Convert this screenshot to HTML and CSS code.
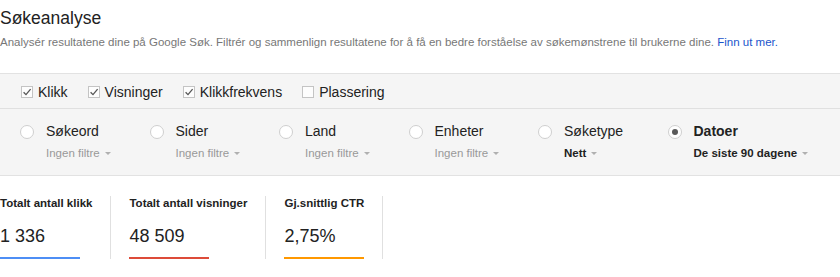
FILE: index.html
```html
<!DOCTYPE html>
<html lang="no">
<head>
<meta charset="utf-8">
<title>Søkeanalyse</title>
<link rel="stylesheet" href="styles.css">
</head>
<body>
<header class="intro">
  <h1 class="title">Søkeanalyse</h1>
  <p class="subtitle">Analysér resultatene dine på Google Søk. Filtrér og sammenlign resultatene for å få en bedre forståelse av søkemønstrene til brukerne dine. <a class="link" href="#">Finn ut mer.</a></p>
</header>

<section class="panel">
  <div class="metrics">
    <label class="check"><span class="box checked"><svg viewBox="0 0 12 12" width="12" height="12"><path d="M2.6 6.2 L5 8.6 L9.6 3.2" fill="none" stroke="#555" stroke-width="1.3"/></svg></span>Klikk</label>
    <label class="check"><span class="box checked"><svg viewBox="0 0 12 12" width="12" height="12"><path d="M2.6 6.2 L5 8.6 L9.6 3.2" fill="none" stroke="#555" stroke-width="1.3"/></svg></span>Visninger</label>
    <label class="check"><span class="box checked"><svg viewBox="0 0 12 12" width="12" height="12"><path d="M2.6 6.2 L5 8.6 L9.6 3.2" fill="none" stroke="#555" stroke-width="1.3"/></svg></span>Klikkfrekvens</label>
    <label class="check"><span class="box"></span>Plassering</label>
  </div>
  <div class="dims">
    <div class="dim">
      <span class="radio"></span>
      <div class="dim-text">
        <div class="dim-name">Søkeord</div>
        <div class="dim-filter">Ingen filtre<span class="caret"></span></div>
      </div>
    </div>
    <div class="dim">
      <span class="radio"></span>
      <div class="dim-text">
        <div class="dim-name">Sider</div>
        <div class="dim-filter">Ingen filtre<span class="caret"></span></div>
      </div>
    </div>
    <div class="dim">
      <span class="radio"></span>
      <div class="dim-text">
        <div class="dim-name">Land</div>
        <div class="dim-filter">Ingen filtre<span class="caret"></span></div>
      </div>
    </div>
    <div class="dim">
      <span class="radio"></span>
      <div class="dim-text">
        <div class="dim-name">Enheter</div>
        <div class="dim-filter">Ingen filtre<span class="caret"></span></div>
      </div>
    </div>
    <div class="dim">
      <span class="radio"></span>
      <div class="dim-text">
        <div class="dim-name">Søketype</div>
        <div class="dim-filter active">Nett<span class="caret"></span></div>
      </div>
    </div>
    <div class="dim">
      <span class="radio selected"></span>
      <div class="dim-text">
        <div class="dim-name bold">Datoer</div>
        <div class="dim-filter active">De siste 90 dagene<span class="caret"></span></div>
      </div>
    </div>
  </div>
</section>

<section class="stats">
  <div class="stat">
    <div class="stat-label">Totalt antall klikk</div>
    <div class="stat-value">1 336</div>
    <div class="stat-bar blue"></div>
  </div>
  <div class="stat">
    <div class="stat-label">Totalt antall visninger</div>
    <div class="stat-value">48 509</div>
    <div class="stat-bar red"></div>
  </div>
  <div class="stat">
    <div class="stat-label">Gj.snittlig CTR</div>
    <div class="stat-value">2,75%</div>
    <div class="stat-bar orange"></div>
  </div>
</section>
</body>
</html>
```

FILE: styles.css
```css
* { box-sizing: border-box; }

body {
  margin: 0;
  background: #fff;
  font-family: "Liberation Sans", Arial, sans-serif;
  color: #222;
}

.intro {
  padding-top: 6px;
}

.title {
  margin: 0;
  font-size: 17.5px;
  line-height: 24px;
  font-weight: normal;
  color: #222;
}

.subtitle {
  margin: 4px 0 0;
  font-size: 11.5px;
  line-height: 16px;
  color: #777;
}

.link {
  color: #1a55cc;
  text-decoration: none;
}

.panel {
  margin-top: 23px;
  background: #f5f5f5;
  border-top: 1px solid #e2e2e2;
  border-bottom: 1px solid #e2e2e2;
}

.metrics {
  display: flex;
  align-items: center;
  gap: 20px;
  height: 35px;
  padding: 1px 0 0 21px;
  border-bottom: 1px solid #e0e0e0;
}

.check {
  display: flex;
  align-items: center;
  gap: 5px;
  font-size: 14px;
  color: #222;
}

.box {
  width: 12px;
  height: 12px;
  border: 1px solid #c4c4c4;
  background: #fdfdfd;
  display: flex;
  align-items: center;
  justify-content: center;
}

.box svg {
  display: block;
  flex: none;
}

.dims {
  display: grid;
  grid-template-columns: repeat(6, 129.5px);
  padding: 13px 0 0 20px;
  height: 66px;
}

.dim {
  display: flex;
  align-items: flex-start;
  gap: 12px;
}

.radio {
  flex: none;
  width: 14px;
  height: 14px;
  margin-top: 3px;
  border-radius: 50%;
  border: 1px solid #cfcfcf;
  background: #fff;
  display: flex;
  align-items: center;
  justify-content: center;
}

.radio.selected::after {
  content: "";
  width: 6px;
  height: 6px;
  border-radius: 50%;
  background: #5a5a5a;
}

.dim-name {
  font-size: 14px;
  line-height: 18px;
  color: #222;
}

.dim-name.bold {
  font-weight: bold;
}

.dim-filter {
  margin-top: 5px;
  font-size: 11.5px;
  line-height: 16px;
  color: #999;
  display: flex;
  align-items: center;
  white-space: nowrap;
}

.dim-filter.active {
  font-weight: bold;
  color: #222;
}

.caret {
  margin-left: 5px;
  margin-top: 1px;
  width: 0;
  height: 0;
  border-left: 3px solid transparent;
  border-right: 3px solid transparent;
  border-top: 3.5px solid #b0b0b0;
}

.stats {
  display: flex;
  margin-top: 20px;
}

.stat {
  padding: 0 18px;
  border-right: 1px solid #e0e0e0;
  height: 63px;
}

.stat:first-child {
  padding-left: 0;
}

.stat-label {
  font-size: 11.5px;
  line-height: 14px;
  font-weight: bold;
  color: #222;
  white-space: nowrap;
}

.stat-value {
  margin-top: 14px;
  font-size: 18px;
  line-height: 24px;
  color: #222;
}

.stat-bar {
  width: 80px;
  height: 2px;
  margin-top: 9px;
}

.stat-bar.blue { background: #4d8ef5; }
.stat-bar.red { background: #dd4b39; }
.stat-bar.orange { background: #ff9800; }
```
